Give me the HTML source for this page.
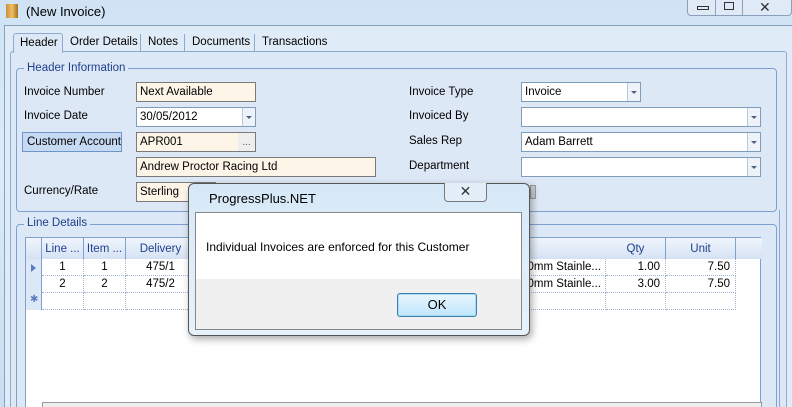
<!DOCTYPE html>
<html><head><meta charset="utf-8"><style>
*{box-sizing:border-box;margin:0;padding:0;white-space:nowrap}
html,body{width:792px;height:407px;overflow:hidden}
body{position:relative;font-family:"Liberation Sans",sans-serif;font-size:11.5px;color:#000;background:linear-gradient(180deg,#cfe3f5 0%,#dcebf8 40%,#c8def2 100%)}
.a{position:absolute}
.lbl{position:absolute;font-size:11.5px}
.box{position:absolute;border:1px solid #7a7a7a;background:#fdf5e8;padding:3px 3px 0;height:20px}
.cb{position:absolute;border:1px solid #7f9db9;background:#fff;padding:3px 3px 0;height:20px}
.cb .dd{position:absolute;right:0;top:0;width:13px;height:18px;border-left:1px solid #b9c9dc;background:#eef3fa}
.cb .dd:after{content:"";position:absolute;left:3px;top:8px;border-left:3px solid transparent;border-right:3px solid transparent;border-top:3px solid #4d6185}
.grp{position:absolute;border:1px solid #7fa1d2;border-radius:4px}
.gt{position:absolute;background:#dde8f6;color:#1e3f8c;padding:0 3px}
.hd{position:absolute;top:0;height:21px;border-right:1px solid #7fa1d2;text-align:center;color:#1e3f8c;line-height:22px;overflow:hidden}
.c{position:absolute;text-align:center;height:17px;line-height:16px;border-right:1px dotted #9fb3d1;border-bottom:1px dotted #9fb3d1;overflow:hidden}
</style></head><body>
<div class="a" style="left:6px;top:4px;width:12px;height:14px;background:linear-gradient(90deg,#c89040,#f0c060,#a07020)"></div>
<div class="lbl" style="left:26px;top:4px;font-size:13px">(New Invoice)</div>
<div class="a" style="left:687px;top:0;width:105px;height:16px;border:1px solid #8aa0ba;border-top:none;border-radius:0 0 4px 4px;background:#dfeaf6"></div>
<div class="a" style="left:715px;top:0;width:1px;height:15px;background:#8aa0ba"></div>
<div class="a" style="left:742px;top:0;width:1px;height:15px;background:#8aa0ba"></div>
<div class="a" style="left:697px;top:6px;width:12px;height:4px;border:1px solid #333"></div>
<div class="a" style="left:724px;top:2px;width:10px;height:8px;border:1px solid #333"></div>
<div class="lbl" style="left:759px;top:-1px;font-size:14px;color:#333">✕</div>
<div class="a" style="left:4px;top:25px;width:788px;height:382px;background:#e0ebf8;border-left:1px solid #8aa0ba;border-top:1px solid #8aa0ba"></div>
<div class="a" style="left:10px;top:51px;width:777px;height:360px;border:1px solid #8ea9cf;border-radius:3px;background:#dde8f6"></div>
<div class="a" style="left:13px;top:33px;width:50px;height:20px;border:1px solid #8ea9cf;border-bottom:none;background:#dde8f6;border-radius:3px 3px 0 0"></div>
<div class="lbl" style="left:20px;top:37px">Header</div>
<div class="lbl" style="left:70px;top:36px">Order Details</div>
<div class="a" style="left:140px;top:34px;width:1px;height:17px;background:#8ea9cf"></div>
<div class="lbl" style="left:148px;top:36px">Notes</div>
<div class="a" style="left:184px;top:34px;width:1px;height:17px;background:#8ea9cf"></div>
<div class="lbl" style="left:192px;top:36px">Documents</div>
<div class="a" style="left:254px;top:34px;width:1px;height:17px;background:#8ea9cf"></div>
<div class="lbl" style="left:262px;top:36px">Transactions</div>
<div class="grp" style="left:16px;top:68px;width:761px;height:144px"></div>
<div class="gt" style="left:24px;top:62px">Header Information</div>
<div class="lbl" style="left:24px;top:86px">Invoice Number</div>
<div class="box" style="left:136px;top:82px;width:120px">Next Available</div>
<div class="lbl" style="left:24px;top:110px">Invoice Date</div>
<div class="cb" style="left:136px;top:107px;width:120px">30/05/2012<span class="dd"></span></div>
<div class="a" style="left:22px;top:132px;width:100px;height:20px;border:1px solid #6f95c8;background:#c6dbf3;padding:3px 4px">Customer Account</div>
<div class="box" style="left:136px;top:132px;width:120px">APR001<span class="a" style="right:0;top:0;width:17px;height:18px;background:#eeeeee;color:#555;font-size:10px;text-align:center;line-height:20px">...</span></div>
<div class="box" style="left:136px;top:157px;width:240px">Andrew Proctor Racing Ltd</div>
<div class="lbl" style="left:24px;top:185px">Currency/Rate</div>
<div class="box" style="left:136px;top:182px;width:80px">Sterling</div>
<div class="lbl" style="left:409px;top:86px">Invoice Type</div>
<div class="cb" style="left:521px;top:82px;width:120px">Invoice<span class="dd"></span></div>
<div class="lbl" style="left:409px;top:110px">Invoiced By</div>
<div class="cb" style="left:521px;top:107px;width:240px"><span class="dd"></span></div>
<div class="lbl" style="left:409px;top:135px">Sales Rep</div>
<div class="cb" style="left:521px;top:132px;width:240px">Adam Barrett<span class="dd"></span></div>
<div class="lbl" style="left:409px;top:160px">Department</div>
<div class="cb" style="left:521px;top:157px;width:240px"><span class="dd"></span></div>
<div class="a" style="left:530px;top:185px;width:6px;height:14px;background:#ccc;border:1px solid #999"></div>
<div class="grp" style="left:16px;top:224px;width:761px;height:200px"></div>
<div class="gt" style="left:24px;top:217px">Line Details</div>
<div class="a" style="left:25px;top:237px;width:736px;height:175px;background:#fff;border:1px solid #7fa1d2">
 <div class="a" style="left:0;top:0;width:736px;height:21px;background:linear-gradient(#f0f5fc,#d5e2f4)"></div>
 <div class="hd" style="left:0;width:16px"></div>
 <div class="hd" style="left:16px;width:42px">Line ...</div>
 <div class="hd" style="left:58px;width:42px">Item ...</div>
 <div class="hd" style="left:100px;width:70px">Delivery</div>
 <div class="hd" style="left:580px;width:60px">Qty</div>
 <div class="hd" style="left:640px;width:70px">Unit</div>
 <div class="a" style="left:0;top:21px;width:16px;height:51px;background:#dde8f6;border-right:1px solid #7fa1d2"></div>
 <div class="a" style="left:5px;top:26px;border-top:4px solid transparent;border-bottom:4px solid transparent;border-left:5px solid #5a7fc0"></div>
 <div class="a" style="left:4px;top:56px;color:#5a7fc0;font-size:10px">✱</div>
 <div class="c" style="left:16px;top:21px;width:42px">1</div><div class="c" style="left:58px;top:21px;width:42px">1</div><div class="c" style="left:100px;top:21px;width:70px">475/1</div>
 <div class="c" style="left:16px;top:38px;width:42px">2</div><div class="c" style="left:58px;top:38px;width:42px">2</div><div class="c" style="left:100px;top:38px;width:70px">475/2</div>
 <div class="c" style="left:16px;top:55px;width:42px"></div><div class="c" style="left:58px;top:55px;width:42px"></div><div class="c" style="left:100px;top:55px;width:480px"></div>
 <div class="c" style="left:480px;top:21px;width:100px;text-align:right;padding-right:4px">60mm Stainle...</div><div class="c" style="left:580px;top:21px;width:60px;text-align:right;padding-right:5px">1.00</div><div class="c" style="left:640px;top:21px;width:70px;text-align:right;padding-right:5px">7.50</div>
 <div class="c" style="left:480px;top:38px;width:100px;text-align:right;padding-right:4px">60mm Stainle...</div><div class="c" style="left:580px;top:38px;width:60px;text-align:right;padding-right:5px">3.00</div><div class="c" style="left:640px;top:38px;width:70px;text-align:right;padding-right:5px">7.50</div>
 <div class="c" style="left:580px;top:55px;width:60px"></div><div class="c" style="left:640px;top:55px;width:70px"></div>
 <div class="a" style="left:16px;top:164px;width:720px;height:10px;border:1px solid #999;background:#eee"></div>
</div>
<div class="a" style="left:779px;top:210px;width:1px;height:197px;background:#8ea9cf"></div>
<div class="a" style="left:188px;top:183px;width:342px;height:153px;border:1px solid #555;border-radius:6px;background:linear-gradient(180deg,#d6e8f8,#e6f2fb);box-shadow:2px 3px 8px rgba(0,0,0,.35)"></div>
<div class="lbl" style="left:209px;top:191px;font-size:13px">ProgressPlus.NET</div>
<div class="a" style="left:444px;top:183px;width:43px;height:19px;border:1px solid #777;border-top:none;border-radius:0 0 4px 4px;background:#e4eef8;text-align:center;color:#333;font-size:14px;line-height:17px">✕</div>
<div class="a" style="left:195px;top:212px;width:327px;height:118px;border:1px solid #888;background:#f0f0f0"></div>
<div class="a" style="left:196px;top:213px;width:325px;height:66px;background:#fff"></div>
<div class="lbl" style="left:206px;top:240px;font-size:12px">Individual Invoices are enforced for this Customer</div>
<div class="a" style="left:397px;top:293px;width:80px;height:24px;border:1px solid #3c7fb1;border-radius:3px;background:linear-gradient(#eaf6fd,#bee6fd);text-align:center;line-height:22px;font-size:13px;box-shadow:inset 0 0 0 1px #a8dcf7">OK</div>
</body></html>
